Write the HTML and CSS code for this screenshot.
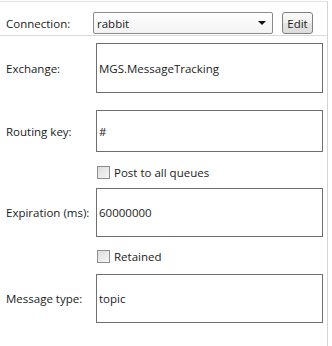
FILE: index.html
```html
<!DOCTYPE html>
<html lang="en">
<head>
    <meta charset="UTF-8">
    <title>Message properties</title>
    <link rel="stylesheet" href="styles.css">
</head>
<body>
    <div class="panel">
        <div class="conn-row">
            <span class="lbl conn-lbl">Connection:</span>
            <div class="combo">
                <span>rabbit</span>
                <span class="arrow"></span>
            </div>
            <button class="btn">Edit</button>
        </div>

        <div class="fields">
            <div class="field ex-row">
                <span class="lbl">Exchange:</span>
                <div class="box">MGS.MessageTracking</div>
            </div>
            <div class="field key-row">
                <span class="lbl">Routing key:</span>
                <div class="box">#</div>
            </div>
            <div class="check-row post-row">
                <span class="check"></span>
                <span>Post to all queues</span>
            </div>
            <div class="field exp-row">
                <span class="lbl">Expiration (ms):</span>
                <div class="box">60000000</div>
            </div>
            <div class="check-row ret-row">
                <span class="check"></span>
                <span>Retained</span>
            </div>
            <div class="field type-row">
                <span class="lbl">Message type:</span>
                <div class="box">topic</div>
            </div>
        </div>
    </div>
</body>
</html>
```

FILE: styles.css
```css
body {
    margin: 0;
    background: #fff;
    font-family: "Open Sans", "Noto Sans", sans-serif;
    font-size: 11.5px;
    color: #1b1b1b;
}
.panel {
    width: 328px;
    height: 345px;
    margin-top: 1px;
    border-top: 1px solid #e2e2e2;
    border-right: 1px solid #d4d4d4;
    box-sizing: border-box;
}
.conn-row {
    display: flex;
    align-items: center;
    padding: 10px 0 1px 0;
    border-bottom: 1px solid #dadada;
}
.lbl {
    width: 90px;
    flex: none;
}
.conn-lbl {
    width: 87px;
    padding-left: 6px;
}
.combo {
    width: 180px;
    height: 22px;
    box-sizing: border-box;
    border: 1px solid #8a8a8a;
    border-radius: 2px;
    background: linear-gradient(#fefefe, #f3f3f3);
    display: flex;
    align-items: center;
    justify-content: space-between;
    padding: 0 6px 0 3px;
}
.arrow {
    width: 0;
    height: 0;
    border-left: 4px solid transparent;
    border-right: 4px solid transparent;
    border-top: 4px solid #111;
}
.btn {
    width: 31px;
    height: 22px;
    margin-left: 9px;
    padding: 0;
    font: inherit;
    color: #1b1b1b;
    border: 1px solid #808080;
    border-radius: 3px;
    background: linear-gradient(#fafafa 0%, #f0f0f0 50%, #e5e5e5 51%, #dcdcdc 100%);
}
.fields {
    padding-left: 6px;
}
.field {
    display: flex;
    align-items: center;
}
.box {
    width: 227px;
    box-sizing: border-box;
    border: 1px solid #6f6f6f;
    display: flex;
    align-items: center;
    padding-left: 2px;
    background: #fff;
}
.ex-row { margin-top: 7px; }
.ex-row .box { height: 50px; }
.key-row { margin-top: 17px; }
.key-row .box { height: 42px; }
.exp-row { margin-top: 9px; }
.exp-row .box { height: 49px; }
.type-row { margin-top: 11px; }
.type-row .box { height: 49px; }
.check-row {
    display: flex;
    align-items: center;
    height: 13px;
    padding-left: 91px;
}
.post-row { margin-top: 14px; }
.ret-row { margin-top: 13px; }
.check {
    width: 13px;
    height: 13px;
    box-sizing: border-box;
    border: 1px solid #8e8f8f;
    background: linear-gradient(135deg, #dcdcdc, #f6f6f6);
    margin-right: 4px;
}
```
